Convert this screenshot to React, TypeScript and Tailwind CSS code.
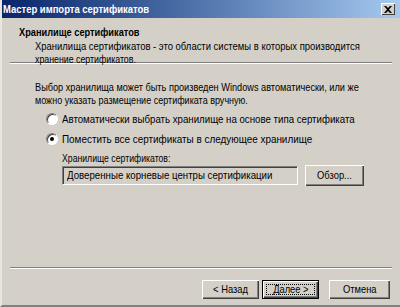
import React from "react";

const font = { fontFamily: '"Liberation Sans", Arial, sans-serif' };

const bevel = "shadow-[inset_1px_1px_0_#fff,inset_-1px_-1px_0_#404040,inset_-2px_-2px_0_#808080]";

const Btn: React.FC<{ children: React.ReactNode; className?: string; def?: boolean }> = ({ children, className = "", def }) => (
  <div
    className={`relative flex items-center justify-center whitespace-nowrap bg-[#d4d0c8] text-[11px] text-black ${bevel} ${
      def ? "border border-black" : ""
    } ${className}`}
  >
    {def && <div className="absolute inset-[3px] border border-dotted border-black" />}
    <span className="inline-block origin-center scale-x-[0.85]">{children}</span>
  </div>
);

const Radio: React.FC<{ checked?: boolean }> = ({ checked }) => (
  <div className="w-[12px] h-[12px] shrink-0 rounded-full bg-white border border-[#808080] border-b-[#fff] border-r-[#fff] flex items-center justify-center shadow-[inset_1px_1px_0_#404040]">
    {checked && <div className="w-[4px] h-[4px] rounded-full bg-black" />}
  </div>
);

const Separator = () => (
  <div className="mx-[8px] h-[2px] border-t border-[#808080] border-b border-b-white" />
);

export default function App() {
  return (
    <div
      style={font}
      className="w-[400px] h-[307px] bg-[#d4d0c8] flex flex-col overflow-hidden whitespace-nowrap border-l-2 border-l-[#e8e6e0] border-b-2 border-b-[#808080] text-[11px] text-black"
    >
      {/* Title bar */}
      <div className="h-[18px] flex items-center justify-between bg-gradient-to-r from-[#0a246a] to-[#a6caf0] pl-[1px] pr-[5px]">
        <span className="inline-block origin-left scale-x-[0.86] text-white font-bold text-[11px]">
          Мастер импорта сертификатов
        </span>
        <div className="w-[14px] h-[12px] bg-[#d4d0c8] flex items-center justify-center shadow-[inset_1px_1px_0_#fff,inset_-1px_-1px_0_#404040]">
          <svg width="8" height="7" viewBox="0 0 8 7">
            <path d="M0 0 L2 0 L4 2 L6 0 L8 0 L5 3.5 L8 7 L6 7 L4 5 L2 7 L0 7 L3 3.5 Z" fill="#000" />
          </svg>
        </div>
      </div>

      {/* Header */}
      <div className="h-[44px] pt-[7px] flex flex-col">
        <div className="pl-[17px] leading-[14px]">
          <span className="inline-block origin-left scale-x-[0.84] font-bold">Хранилище сертификатов</span>
        </div>
        <div className="pl-[33px] leading-[13px] mt-[1px]">
          <div className="origin-left scale-x-[0.86]">
            Хранилища сертификатов - это области системы в которых производится
          </div>
          <div className="origin-left scale-x-[0.8]">хранение сертификатов.</div>
        </div>
      </div>
      <Separator />

      {/* Body */}
      <div className="flex-1 flex flex-col pl-[33px] pt-[17px]">
        <div className="leading-[13px]">
          <div className="origin-left scale-x-[0.835]">
            Выбор хранилища может быть произведен Windows автоматически, или же
          </div>
          <div className="origin-left scale-x-[0.82]">можно указать размещение сертификата вручную.</div>
        </div>
        <div className="h-[14px] flex items-center gap-[4px] pl-[11px] mt-[5px]">
          <Radio />
          <span className="inline-block origin-left scale-x-[0.88]">
            Автоматически выбрать хранилище на основе типа сертификата
          </span>
        </div>
        <div className="h-[14px] flex items-center gap-[4px] pl-[11px] mt-[6px]">
          <Radio checked />
          <span className="inline-block origin-left scale-x-[0.9]">
            Поместить все сертификаты в следующее хранилище
          </span>
        </div>
        <div className="pl-[27px] mt-[6px]">
          <div className="leading-[13px]">
            <span className="inline-block origin-left scale-x-[0.79]">Хранилище сертификатов:</span>
          </div>
          <div className="flex items-center gap-[7px]">
            <div className="w-[236px] h-[19px] flex items-center pl-[4px] bg-[#d4d0c8] border border-[#808080] border-b-white border-r-white shadow-[inset_1px_1px_0_#404040]">
              <span className="inline-block origin-left scale-x-[0.88]">
                Доверенные корневые центры сертификации
              </span>
            </div>
            <Btn className="w-[59px] h-[21px]">Обзор...</Btn>
          </div>
        </div>
      </div>

      <Separator />
      {/* Buttons */}
      <div className="h-[36px] flex items-start justify-end pr-[10px] pt-[11px]">
        <Btn className="w-[57px] h-[19px]">&lt; Назад</Btn>
        <Btn def className="w-[57px] h-[19px] ml-[3px]">Далее &gt;</Btn>
        <Btn className="w-[61px] h-[19px] ml-[10px]">Отмена</Btn>
      </div>
    </div>
  );
}
